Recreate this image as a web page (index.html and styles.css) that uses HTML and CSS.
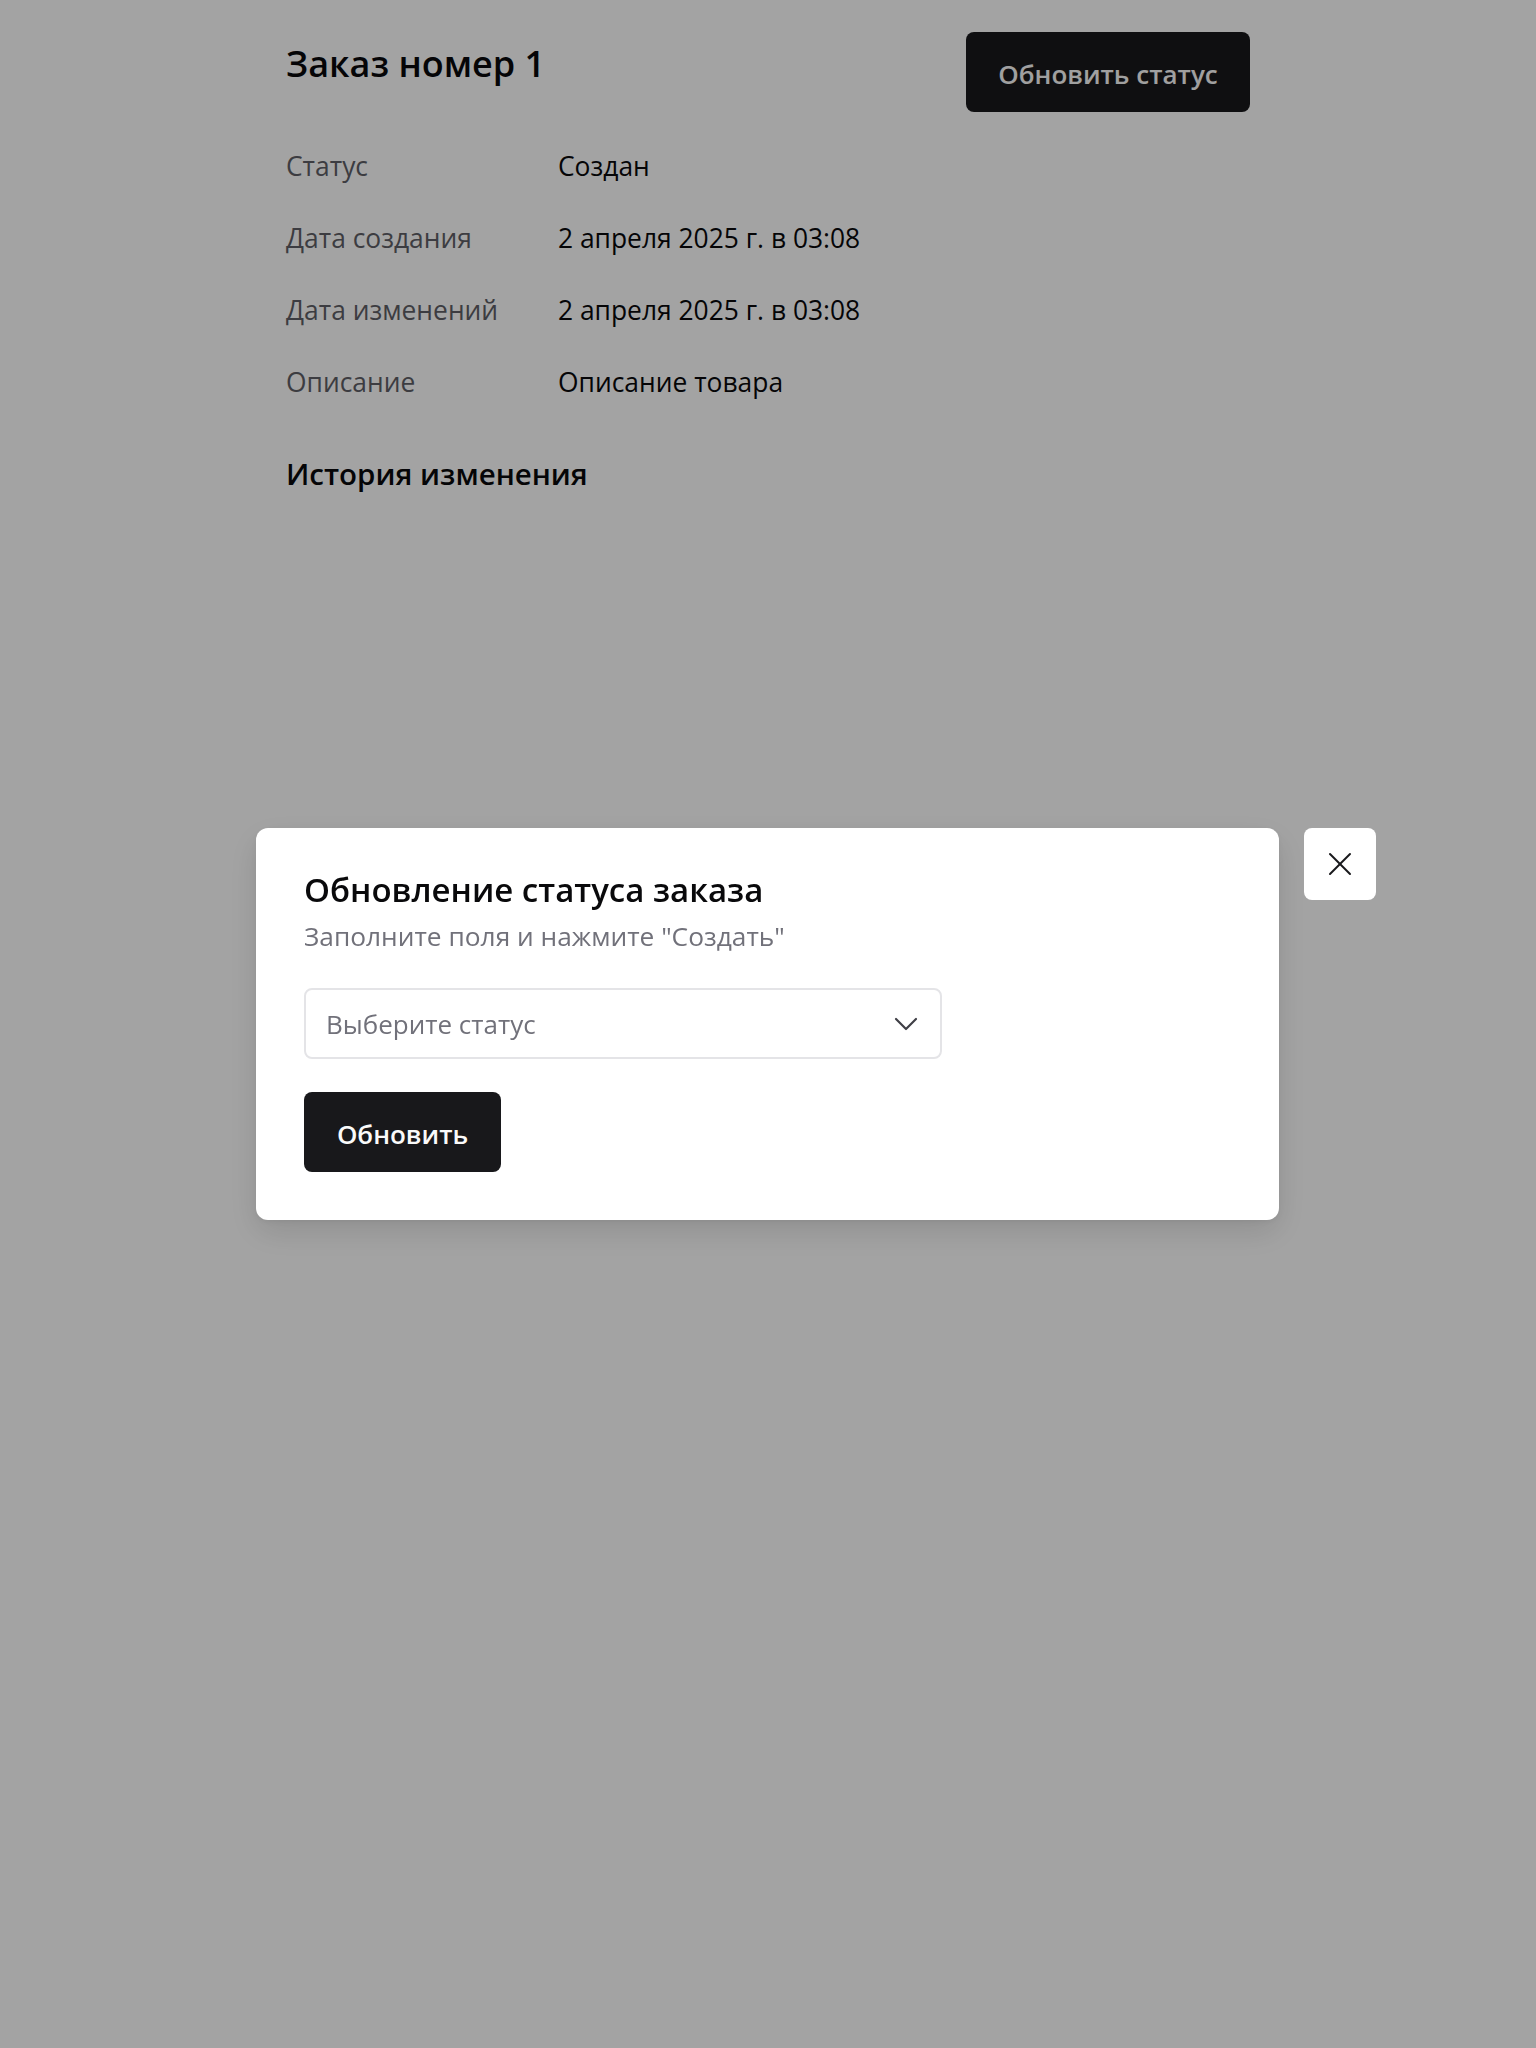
FILE: index.html
```html
<!DOCTYPE html>
<html lang="ru">
<head>
<meta charset="utf-8">
<title>Заказ номер 1</title>
<link rel="stylesheet" href="styles.css">
</head>
<body>
<main class="page">
  <div class="header">
    <h1 class="title">Заказ номер 1</h1>
    <button class="btn btn-top">Обновить статус</button>
  </div>
  <dl class="details">
    <dt class="label">Статус</dt><dd class="value">Создан</dd>
    <dt class="label">Дата создания</dt><dd class="value">2 апреля 2025 г. в 03:08</dd>
    <dt class="label">Дата изменений</dt><dd class="value">2 апреля 2025 г. в 03:08</dd>
    <dt class="label">Описание</dt><dd class="value">Описание товара</dd>
  </dl>
  <h2 class="history">История изменения</h2>
</main>
<div class="overlay"></div>
<div class="dialog" role="dialog">
  <h3 class="dialog-title">Обновление статуса заказа</h3>
  <p class="dialog-sub">Заполните поля и нажмите "Создать"</p>
  <div class="select">
    <span class="placeholder">Выберите статус</span>
    <svg class="chevron" width="40" height="40" viewBox="0 0 24 24" fill="none" stroke="currentColor" stroke-width="1.3" stroke-linecap="round" stroke-linejoin="round"><path d="m6 9 6 6 6-6"/></svg>
  </div>
  <button class="btn btn-modal">Обновить</button>
  <button class="close" aria-label="Закрыть">
    <svg width="40" height="40" viewBox="0 0 24 24" fill="none" stroke="currentColor" stroke-width="1.2" stroke-linecap="round" stroke-linejoin="round"><path d="M18 6 6 18"/><path d="m6 6 12 12"/></svg>
  </button>
</div>
</body>
</html>
```
FILE: styles.css
```css
* { box-sizing: border-box; }
html, body { margin: 0; padding: 0; }
body {
  font-family: "Open Sans", "Noto Sans", sans-serif;
  color: #09090b;
  background: #ffffff;
  min-height: 2048px;
}
.page {
  width: 964px;
  margin: 0 auto;
  padding-top: 32px;
}
.header {
  display: flex;
  justify-content: space-between;
  align-items: flex-start;
}
.title {
  margin: 0;
  padding-top: 8px;
  font-size: 36px;
  line-height: 48px;
  font-weight: 600;
}
.btn {
  font-family: inherit;
  border: none;
  background: #18181b;
  color: #fafafa;
  border-radius: 8px;
  font-weight: 600;
  display: inline-flex;
  align-items: center;
  justify-content: center;
  cursor: pointer;
  padding: 4px 0 0;
}
.btn-top {
  width: 284px;
  height: 80px;
  font-size: 26px;
}
.details {
  display: grid;
  grid-template-columns: 272px 1fr;
  row-gap: 36px;
  margin: 36px 0 0;
  font-size: 26.4px;
  line-height: 36px;
}
.label { color: #5f5f67; margin: 0; }
.value { margin: 0; }
.history {
  margin: 54px 0 0;
  font-size: 29.5px;
  line-height: 40px;
  font-weight: 600;
}
.overlay {
  position: fixed;
  inset: 0;
  background: rgba(0, 0, 0, 0.36);
}
.dialog {
  position: fixed;
  left: 256px;
  top: 828px;
  width: 1023px;
  padding: 42px 48px 48px;
  background: #ffffff;
  border-radius: 12px;
  box-shadow: 0 12px 32px rgba(0, 0, 0, 0.12), 0 2px 6px rgba(0, 0, 0, 0.06);
}
.dialog-title {
  margin: 0;
  font-size: 33px;
  line-height: 40px;
  font-weight: 600;
}
.dialog-sub {
  margin: 8px 0 0;
  font-size: 26.3px;
  line-height: 36px;
  color: #71717a;
}
.select {
  margin-top: 34px;
  width: 638px;
  height: 71px;
  border: 2px solid #e4e4e7;
  border-radius: 8px;
  display: flex;
  align-items: center;
  justify-content: space-between;
  padding: 0 14px 0 20px;
}
.placeholder {
  font-size: 26px;
  color: #71717a;
}
.chevron { color: #3f3f46; }
.btn-modal {
  margin-top: 33px;
  width: 197px;
  height: 80px;
  font-size: 26px;
}
.close {
  position: absolute;
  top: 0;
  right: -97px;
  width: 72px;
  height: 72px;
  background: #ffffff;
  border: none;
  border-radius: 8px;
  display: flex;
  align-items: center;
  justify-content: center;
  color: #18181b;
  padding: 0;
}
```
